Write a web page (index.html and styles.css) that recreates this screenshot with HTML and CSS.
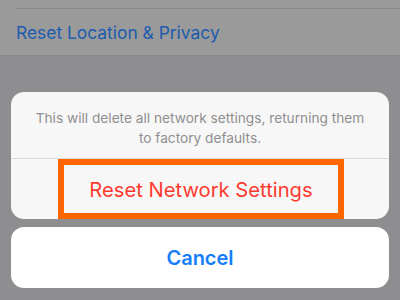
FILE: index.html
```html
<!DOCTYPE html>
<html>
<head>
<meta charset="utf-8">
<link rel="stylesheet" href="styles.css">
</head>
<body>
<div class="settings">
  <div class="row-top"></div>
  <div class="row">Reset Location &amp; Privacy</div>
</div>
<div class="sheet">
  <div class="group">
    <div class="message">This will delete all network settings, returning them to factory defaults.</div>
    <div class="action"><span class="highlight">Reset Network Settings</span></div>
  </div>
  <div class="cancel">Cancel</div>
</div>
</body>
</html>
```
FILE: styles.css
```css
* { box-sizing: border-box; }
html, body { margin: 0; padding: 0; }
body {
  width: 400px;
  height: 300px;
  overflow: hidden;
  background: #8e8e90;
  font-family: Inter, "Liberation Sans", sans-serif;
}
.settings {
  background: #9a9a9a;
  height: 56px;
  padding-left: 16px;
  border-bottom: 1px solid #8a8a8a;
}
.row-top {
  height: 9px;
  border-bottom: 1px solid #898989;
}
.row {
  height: 47px;
  display: flex;
  align-items: center;
  font-size: 17.4px;
  color: #1d5cae;
}
.sheet {
  padding: 36px 11px 0 11px;
  display: flex;
  flex-direction: column;
  gap: 8px;
}
.group {
  background: #f7f7f7;
  border-radius: 13px;
  height: 127px;
  display: flex;
  flex-direction: column;
  overflow: hidden;
}
.message {
  height: 67px;
  border-bottom: 1px solid #dcdcdc;
  padding: 16px 20px 0;
  text-align: center;
  font-size: 13.7px;
  line-height: 20px;
  color: #8f8f8f;
}
.action {
  flex: 1;
  display: flex;
  padding-left: 47px;
}
.highlight {
  width: 286px;
  height: 60px;
  border: 6px solid #ff6600;
  display: flex;
  align-items: center;
  justify-content: center;
  color: #ff3b30;
  font-size: 20.2px;
}
.cancel {
  background: #ffffff;
  border-radius: 13px;
  height: 61px;
  display: flex;
  align-items: center;
  justify-content: center;
  color: #147efb;
  font-size: 20px;
  font-weight: 600;
}
```
